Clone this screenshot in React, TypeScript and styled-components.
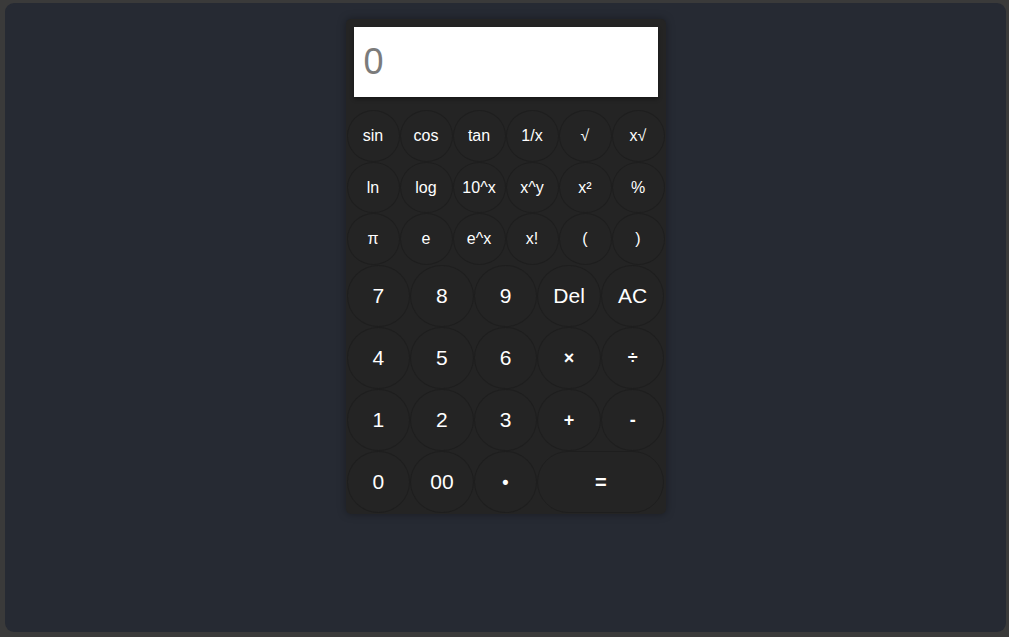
import React from "react";
import styled, { createGlobalStyle } from "styled-components";

const Global = createGlobalStyle`
  html, body { margin: 0; padding: 0; }
  body {
    background: #3a3a3a;
    font-family: "Liberation Sans", Arial, sans-serif;
    overflow: hidden;
  }
`;

const Frame = styled.div`
  margin: 3px 3px 5px 5px;
  height: 629px;
  border-radius: 9px;
  background: #262a33;
  display: flex;
  justify-content: center;
  align-items: flex-start;
  padding-top: 16px;
  box-sizing: border-box;
`;

const Card = styled.div`
  width: 320px;
  background: #242424;
  border-radius: 5px;
  box-shadow: 0 0 8px rgba(0, 0, 0, 0.35);
  padding: 8px 0 1px;
  box-sizing: border-box;
`;

const Display = styled.div`
  margin: 0 8px 13px;
  height: 70px;
  background: #ffffff;
  box-shadow: 0 2px 4px rgba(0, 0, 0, 0.4);
  color: #7b7b7b;
  font-size: 36px;
  line-height: 70px;
  padding-left: 10px;
  box-sizing: border-box;
`;

const Grid = styled.div<{ $cols: number; $row: number }>`
  display: grid;
  grid-template-columns: repeat(${(p) => p.$cols}, 1fr);
  grid-auto-rows: ${(p) => p.$row}px;
  padding: 0 1px;
`;

const Key = styled.button<{ $size: number; $span?: number; $bold?: boolean }>`
  grid-column: span ${(p) => p.$span ?? 1};
  margin: 0;
  padding: 0;
  background: transparent;
  border: 1px solid #1e1e1e;
  border-radius: ${(p) => (p.$span ? "32px" : "50%")};
  color: #ffffff;
  font-family: "Liberation Sans", Arial, sans-serif;
  font-size: ${(p) => p.$size}px;
  font-weight: ${(p) => (p.$bold ? 700 : 400)};
  cursor: pointer;
  box-sizing: border-box;
`;

const sci = [
  "sin", "cos", "tan", "1/x", "√", "x√",
  "ln", "log", "10^x", "x^y", "x²", "%",
  "π", "e", "e^x", "x!", "(", ")",
];

const nums = [
  "7", "8", "9", "Del", "AC",
  "4", "5", "6", "×", "÷",
  "1", "2", "3", "+", "-",
  "0", "00", "•",
];

const ops = ["×", "÷", "+", "-", "•"];

export default function App() {
  return (
    <>
      <Global />
      <Frame>
        <Card>
          <Display>0</Display>
          <Grid $cols={6} $row={51.7}>
            {sci.map((k) => (
              <Key key={k} $size={16}>{k}</Key>
            ))}
          </Grid>
          <Grid $cols={5} $row={62}>
            {nums.map((k) => (
              <Key key={k} $size={ops.includes(k) ? 18 : 21} $bold={ops.includes(k)}>
                {k}
              </Key>
            ))}
            <Key $size={20} $span={2} $bold>=</Key>
          </Grid>
        </Card>
      </Frame>
    </>
  );
}
